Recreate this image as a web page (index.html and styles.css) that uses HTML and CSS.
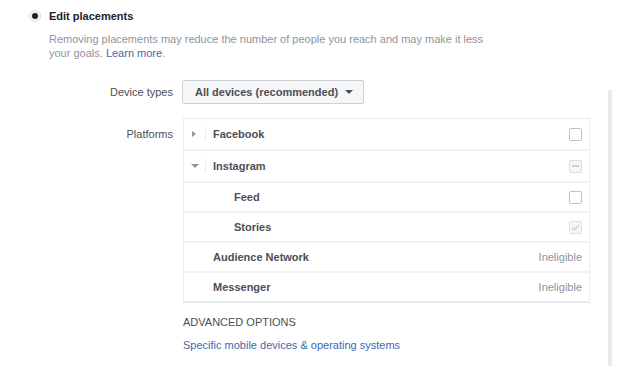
FILE: index.html
```html
<!DOCTYPE html>
<html lang="en">
<head>
    <meta charset="UTF-8">
    <meta name="viewport" content="width=device-width, initial-scale=1.0">
    <title>Edit placements</title>
    <link rel="stylesheet" href="styles.css">
</head>
<body>

    <section class="placements">
        <!-- Selected option -->
        <div class="option">
            <span class="radio"><span class="radio-dot"></span></span>
            <span class="option-title">Edit placements</span>
        </div>
        <p class="option-desc">
            Removing placements may reduce the number of people you reach and may make it less<br>
            your goals. <a href="#" class="link">Learn more</a>.
        </p>

        <!-- Device types -->
        <div class="field field-devices">
            <div class="field-label">Device types</div>
            <div class="field-control">
                <button class="dropdown">All devices (recommended) <span class="caret"></span></button>
            </div>
        </div>

        <!-- Platforms -->
        <div class="field field-platforms">
            <div class="field-label">Platforms</div>
            <div class="field-control">
                <div class="platforms">
                    <div class="row row-tall">
                        <span class="toggle"><span class="tri tri-right"></span></span>
                        <span class="name">Facebook</span>
                        <span class="check"></span>
                    </div>
                    <div class="row row-tall">
                        <span class="toggle"><span class="tri tri-down"></span></span>
                        <span class="name">Instagram</span>
                        <span class="check check-mixed"></span>
                    </div>
                    <div class="row">
                        <span class="name name-sub">Feed</span>
                        <span class="check"></span>
                    </div>
                    <div class="row">
                        <span class="name name-sub">Stories</span>
                        <span class="check check-done">
                            <svg width="9" height="7" viewBox="0 0 9 7"><path d="M1 3.6 L3.4 6 L8 1" fill="none" stroke="#ccd0d5" stroke-width="1.4"/></svg>
                        </span>
                    </div>
                    <div class="row">
                        <span class="name name-plain">Audience Network</span>
                        <span class="status">Ineligible</span>
                    </div>
                    <div class="row row-last">
                        <span class="name name-plain">Messenger</span>
                        <span class="status">Ineligible</span>
                    </div>
                </div>

                <div class="advanced">ADVANCED OPTIONS</div>
                <a href="#" class="link advanced-link">Specific mobile devices &amp; operating systems</a>
            </div>
        </div>

        <!-- Scroll track on the right -->
        <div class="scroll-track"></div>
    </section>

</body>
</html>
```

FILE: styles.css
```css
/* whole page */
*{
    margin: 0;
    padding: 0;
    box-sizing: border-box;
}

body{
    background: #fff;
    font-family: "Liberation Sans", Arial, sans-serif;
    font-size: 11px;
    color: #4b4f56;
}

.placements{
    position: relative;
    width: 641px;
    height: 372px;
    padding-top: 8px;
}

/* Radio option */
.option{
    display: flex;
    align-items: center;
    height: 16px;
    padding-left: 29px;
}

.radio{
    display: flex;
    justify-content: center;
    align-items: center;
    width: 12px;
    height: 12px;
    border: 1px solid #dddfe2;
    border-radius: 50%;
    background: #f5f6f7;
    margin-right: 8px;
}

.radio-dot{
    width: 6px;
    height: 6px;
    border-radius: 50%;
    background: #1d2129;
}

.option-title{
    font-weight: bold;
    color: #1d2129;
}

.option-desc{
    padding-left: 49px;
    margin-top: 8px;
    line-height: 14px;
    color: #90949c;
}

.link{
    color: #4267b2;
    text-decoration: none;
}

/* Label + control rows */
.field{
    display: grid;
    grid-template-columns: 124px 407px;
    column-gap: 10px;
    padding-left: 49px;
}

.field-label{
    text-align: right;
    color: #4b4f56;
}

.field-devices{
    margin-top: 20px;
    align-items: center;
}

.field-platforms{
    margin-top: 14px;
}

.field-platforms .field-label{
    line-height: 32px;
}

.dropdown{
    display: inline-flex;
    align-items: center;
    height: 24px;
    margin-left: -1px;
    padding: 0 10px 0 12px;
    border: 1px solid #ccd0d5;
    border-radius: 2px;
    background: #f5f6f7;
    font-family: inherit;
    font-size: 11px;
    font-weight: bold;
    white-space: nowrap;
    color: #4b4f56;
}

.caret{
    margin-left: 7px;
    border-left: 4px solid transparent;
    border-right: 4px solid transparent;
    border-top: 4px solid #4b4f56;
}

/* Platforms table */
.platforms{
    border: 1px solid #e9ebee;
    border-bottom-width: 2px;
}

.row{
    display: flex;
    align-items: center;
    height: 30px;
    padding: 0 7px 0 0;
    border-bottom: 2px solid #f1f2f4;
}

.row-tall{
    height: 32px;
}

.row-last{
    border-bottom: none;
    height: 28px;
}

.toggle{
    display: flex;
    align-items: center;
    justify-content: center;
    width: 22px;
    height: 14px;
    border-right: 1px solid #e9ebee;
    margin-right: 7px;
}

.tri-right{
    border-top: 3px solid transparent;
    border-bottom: 3px solid transparent;
    border-left: 4px solid #90949c;
    margin-left: -2px;
}

.tri-down{
    border-left: 4px solid transparent;
    border-right: 4px solid transparent;
    border-top: 4px solid #90949c;
}

.name{
    flex: 1;
    font-weight: bold;
    color: #4b4f56;
}

.name-sub{
    padding-left: 50px;
}

.name-plain{
    padding-left: 29px;
}

.check{
    display: flex;
    align-items: center;
    justify-content: center;
    width: 13px;
    height: 13px;
    border: 1px solid #bec3c9;
    border-radius: 2px;
    background: #fff;
}

.check-mixed,
.check-done{
    border-color: #dddfe2;
    background: #f5f6f7;
}

.check-mixed::after{
    content: "";
    width: 7px;
    height: 2px;
    background: #ccd0d5;
}

.status{
    color: #90949c;
}

/* Advanced options */
.advanced{
    margin-top: 12px;
    line-height: 14px;
    color: #4b4f56;
}

.advanced-link{
    display: block;
    margin-top: 9px;
    line-height: 14px;
}

/* scroll track lying over the right side */
.scroll-track{
    position: absolute;
    left: 608px;
    top: 90px;
    width: 4px;
    height: 276px;
    background: #e9ebee;
}
```
